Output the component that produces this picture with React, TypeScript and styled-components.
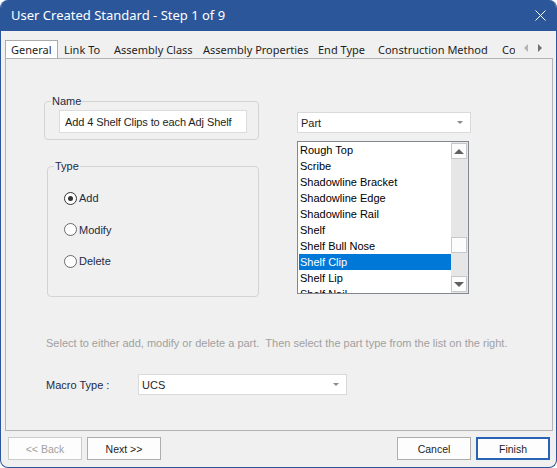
import React from "react";
import styled, { createGlobalStyle } from "styled-components";

const GlobalStyle = createGlobalStyle`
  html, body { margin: 0; padding: 0; background: #ffffff; }
  body { font-family: "Liberation Sans", Arial, sans-serif; font-size: 11px; color: #1e1e1e; }
  * { box-sizing: border-box; }
`;

const Window = styled.div`
  width: 557px;
  height: 468px;
  display: flex;
  flex-direction: column;
  background: #f0f0f0;
  border: 1px solid #2b579a;
  border-top: 0;
  border-radius: 8px;
  overflow: hidden;
`;

const TitleBar = styled.div`
  height: 31px;
  flex: none;
  background: #2b579a;
  color: #ffffff;
  display: flex;
  align-items: center;
  justify-content: space-between;
  padding: 0 10px 1px 10px;
  font-family: "Noto Sans", "Open Sans", sans-serif;
  font-size: 13px;
`;

const Body = styled.div`
  flex: 1;
  display: flex;
  flex-direction: column;
  padding: 9px 3px 7px 4px;
`;

const TabStrip = styled.div`
  height: 18px;
  display: flex;
  align-items: stretch;
`;

const TabList = styled.div`
  width: 510px;
  display: flex;
  overflow: hidden;
  white-space: nowrap;
`;

const Tab = styled.div<{ $w: number; $active?: boolean }>`
  flex: none;
  width: ${p => p.$w}px;
  height: ${p => (p.$active ? 19 : 18)}px;
  padding: 0 0 1px 5px;
  display: flex;
  align-items: center;
  background: ${p => (p.$active ? "#ffffff" : "transparent")};
  border: 1px solid ${p => (p.$active ? "#acacac" : "transparent")};
  border-bottom: 0;
  position: relative;
  z-index: 1;
  color: #1e1e1e;
  font-family: "Noto Sans", "Open Sans", sans-serif;
  font-size: 11px;
`;

const TabArrows = styled.div`
  flex: 1;
  display: flex;
  align-items: center;
  justify-content: space-around;
  padding: 0 6px 3px 4px;
`;

const Tri = styled.span<{ $dir: "left" | "right" | "up" | "down"; $c: string; $s: number }>`
  width: 0;
  height: 0;
  border-style: solid;
  border-color: transparent;
  ${p =>
    p.$dir === "left"
      ? `border-width: ${p.$s}px ${p.$s}px ${p.$s}px 0; border-right-color: ${p.$c};`
      : p.$dir === "right"
      ? `border-width: ${p.$s}px 0 ${p.$s}px ${p.$s}px; border-left-color: ${p.$c};`
      : p.$dir === "up"
      ? `border-width: 0 ${p.$s}px ${p.$s}px ${p.$s}px; border-bottom-color: ${p.$c};`
      : `border-width: ${p.$s}px ${p.$s}px 0 ${p.$s}px; border-top-color: ${p.$c};`}
`;

const Panel = styled.div`
  height: 373px;
  border: 1px solid #b4b4b4;
  background: #f0f0f0;
  padding: 34px 0 0 38px;
`;

const Columns = styled.div`
  display: grid;
  grid-template-columns: 215px 175px;
  column-gap: 38px;
`;

const Column = styled.div`
  display: flex;
  flex-direction: column;
  align-items: flex-start;
`;

const Group = styled.fieldset<{ $w: number; $h: number; $ml?: number; $mt?: number }>`
  width: ${p => p.$w}px;
  height: ${p => p.$h}px;
  margin: ${p => p.$mt ?? 0}px 0 0 ${p => p.$ml ?? 0}px;
  padding: 0;
  border: 1px solid #d3d3d3;
  border-radius: 4px;
  min-width: 0;
`;

const Legend = styled.legend`
  margin-left: 6px;
  padding: 0 1px;
  line-height: 16px;
  height: 16px;
  color: #1e2a44;
`;

const TextBox = styled.div`
  width: 188px;
  height: 23px;
  margin: 1px 0 0 14px;
  background: #ffffff;
  border: 1px solid #dcdcdc;
  padding-left: 5px;
  display: flex;
  align-items: center;
  white-space: nowrap;
  overflow: hidden;
  color: #1e1e1e;
  letter-spacing: -0.1px;
`;

const RadioList = styled.div`
  display: flex;
  flex-direction: column;
  gap: 15.5px;
  padding: 16px 0 0 16px;
`;

const RadioRow = styled.label`
  display: flex;
  align-items: center;
  height: 16px;
  color: #1e2a44;
`;

const RadioDot = styled.span<{ $on?: boolean }>`
  width: 13px;
  height: 13px;
  border-radius: 50%;
  border: 1px solid ${p => (p.$on ? "#333333" : "#6a6a6a")};
  background: #ffffff;
  display: flex;
  align-items: center;
  justify-content: center;
  margin-right: 2px;
  &::after {
    content: "";
    width: 5px;
    height: 5px;
    border-radius: 50%;
    background: ${p => (p.$on ? "#333333" : "transparent")};
  }
`;

const Combo = styled.div<{ $w: number }>`
  width: ${p => p.$w}px;
  height: 21px;
  background: #ffffff;
  border: 1px solid #d9d9d9;
  display: flex;
  align-items: center;
  justify-content: space-between;
  padding: 0 7px 0 3px;
  color: #1e1e1e;
`;

const ListBox = styled.div`
  width: 172px;
  height: 153px;
  margin-top: 8px;
  border: 1px solid #828790;
  background: #ffffff;
  display: flex;
  overflow: hidden;
`;

const Items = styled.div`
  flex: 1;
  padding: 0 0 0 1px;
  overflow: hidden;
`;

const Item = styled.div<{ $sel?: boolean }>`
  height: 16px;
  line-height: 16px;
  padding-left: 1px;
  white-space: nowrap;
  color: ${p => (p.$sel ? "#ffffff" : "#000000")};
  background: ${p => (p.$sel ? "#0078d7" : "transparent")};
`;

const ScrollBar = styled.div`
  width: 17px;
  background: #e6e6e6;
  display: flex;
  flex-direction: column;
  padding: 1px 1px 1px 0;
`;

const ScrollBtn = styled.div`
  width: 16px;
  height: 16px;
  flex: none;
  background: #fcfcfc;
  border: 1px solid #c8c8c8;
  display: flex;
  align-items: center;
  justify-content: center;
`;

const Track = styled.div`
  flex: 1;
`;

const Hint = styled.div`
  margin: 38px 0 0 2px;
  line-height: 16px;
  color: #a0a0a0;
  white-space: pre;
`;

const MacroRow = styled.div`
  margin: 23px 0 0 2px;
  display: flex;
  align-items: center;
`;

const FieldLabel = styled.div`
  width: 92px;
  color: #1e2a44;
`;

const Footer = styled.div`
  margin-top: 6px;
  display: flex;
  gap: 5px;
  padding: 0 3px 0 3px;
`;

const Button = styled.div<{ $disabled?: boolean; $default?: boolean }>`
  width: 74px;
  height: 23px;
  display: flex;
  align-items: center;
  justify-content: center;
  background: #fdfdfd;
  border: 1px solid ${p => (p.$default ? "#2864b4" : p.$disabled ? "#cccccc" : "#adadad")};
  box-shadow: ${p => (p.$default ? "inset 0 0 0 1px #2864b4" : "none")};
  color: ${p => (p.$disabled ? "#a0a0a0" : "#1e1e1e")};
  font-size: 10.5px;
`;

const Spacer = styled.div`
  flex: 1;
`;

const tabs = [
  { label: "General", w: 53 },
  { label: "Link To", w: 50 },
  { label: "Assembly Class", w: 89 },
  { label: "Assembly Properties", w: 115 },
  { label: "End Type", w: 60 },
  { label: "Construction Method", w: 124 },
  { label: "Component Information", w: 140 },
];

const parts = [
  "Rough Top",
  "Scribe",
  "Shadowline Bracket",
  "Shadowline Edge",
  "Shadowline Rail",
  "Shelf",
  "Shelf Bull Nose",
  "Shelf Clip",
  "Shelf Lip",
  "Shelf Nail",
];

const scrollRatio = 0.67;

export default function App() {
  return (
    <>
      <GlobalStyle />
      <Window>
        <TitleBar>
          <span>User Created Standard - Step 1 of 9</span>
          <svg width="11" height="11" viewBox="0 0 11 11">
            <path d="M0.5 0.5L10.5 10.5M10.5 0.5L0.5 10.5" stroke="#ffffff" strokeWidth="1" />
          </svg>
        </TitleBar>
        <Body>
          <TabStrip>
            <TabList>
              {tabs.map((t, i) => (
                <Tab key={t.label} $w={t.w} $active={i === 0}>
                  {t.label}
                </Tab>
              ))}
            </TabList>
            <TabArrows>
              <Tri $dir="left" $c="#b4b4b4" $s={4} />
              <Tri $dir="right" $c="#707070" $s={4} />
            </TabArrows>
          </TabStrip>
          <Panel>
            <Columns>
              <Column>
                <Group $w={215} $h={47}>
                  <Legend>Name</Legend>
                  <TextBox>Add 4 Shelf Clips to each Adj Shelf</TextBox>
                </Group>
                <Group $w={212} $h={139} $ml={3} $mt={18}>
                  <Legend>Type</Legend>
                  <RadioList>
                    <RadioRow>
                      <RadioDot $on />
                      Add
                    </RadioRow>
                    <RadioRow>
                      <RadioDot />
                      Modify
                    </RadioRow>
                    <RadioRow>
                      <RadioDot />
                      Delete
                    </RadioRow>
                  </RadioList>
                </Group>
              </Column>
              <Column>
                <div style={{ height: 19 }} />
                <Combo $w={174}>
                  <span>Part</span>
                  <Tri $dir="down" $c="#8a8a8a" $s={3} />
                </Combo>
                <ListBox>
                  <Items>
                    {parts.map(p => (
                      <Item key={p} $sel={p === "Shelf Clip"}>
                        {p}
                      </Item>
                    ))}
                  </Items>
                  <ScrollBar>
                    <ScrollBtn>
                      <Tri $dir="up" $c="#606060" $s={5} />
                    </ScrollBtn>
                    <Track>
                      <ScrollBtn style={{ marginTop: Math.round(scrollRatio * 116) }} />
                    </Track>
                    <ScrollBtn>
                      <Tri $dir="down" $c="#606060" $s={5} />
                    </ScrollBtn>
                  </ScrollBar>
                </ListBox>
              </Column>
            </Columns>
            <Hint>Select to either add, modify or delete a part.  Then select the part type from the list on the right.</Hint>
            <MacroRow>
              <FieldLabel>Macro Type :</FieldLabel>
              <Combo $w={209}>
                <span>UCS</span>
                <Tri $dir="down" $c="#8a8a8a" $s={3} />
              </Combo>
            </MacroRow>
          </Panel>
          <Footer>
            <Button $disabled>&lt;&lt; Back</Button>
            <Button>Next &gt;&gt;</Button>
            <Spacer />
            <Button>Cancel</Button>
            <Button $default>Finish</Button>
          </Footer>
        </Body>
      </Window>
    </>
  );
}
